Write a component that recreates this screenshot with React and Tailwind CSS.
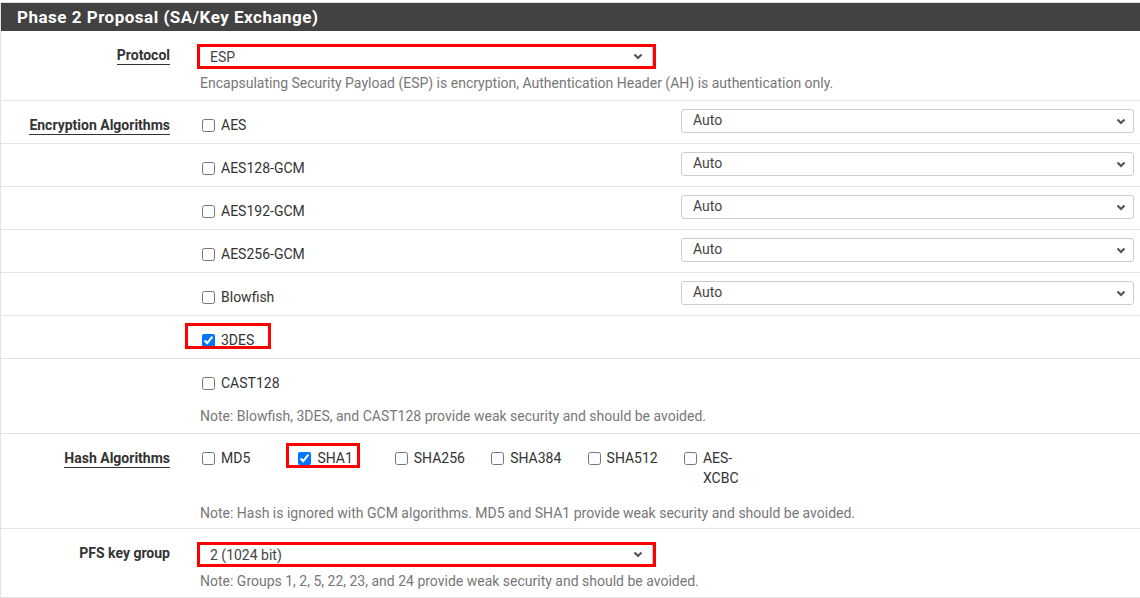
import { useState } from "react";

const font = { fontFamily: "Roboto, 'Liberation Sans', sans-serif" };

function Chevron() {
  return (
    <svg width="10" height="7" viewBox="0 0 10 7" className="shrink-0">
      <path d="M1.5 1.5 L5 5 L8.5 1.5" fill="none" stroke="#555" strokeWidth="2.2" />
    </svg>
  );
}

function FakeSelect({ value, red }) {
  if (red) {
    return (
      <div className="w-[459px] h-[25px] border-[3px] border-[#f00] flex">
        <div className="flex-1 flex items-center justify-between pl-[10px] pr-[9px] border-r border-[#c8c8c8] text-[14px] text-[#444]">
          <span>{value}</span>
          <Chevron />
        </div>
      </div>
    );
  }
  return (
    <div className="w-[453px] h-[24px] border border-[#ccc] rounded-[3px] flex items-center justify-between pl-[11px] pr-[7px] text-[14px] text-[#444]">
      <span className="-mt-[2px]">{value}</span>
      <Chevron />
    </div>
  );
}

function Check({ label, checked, box }) {
  return (
    <label className="relative inline-flex items-start gap-[6px] text-[14px] leading-[20px] text-[#333] align-top">
      <input
        type="checkbox"
        defaultChecked={checked}
        className="w-[13px] h-[13px] mt-[4px] ml-[2px] shrink-0"
      />
      <span>{label}</span>
      {box}
    </label>
  );
}

function Label({ text, underline = true }) {
  return (
    <div className="w-[184px] pr-[15px] pt-[14px] text-right shrink-0">
      <span
        className={
          "text-[14px] leading-[20px] font-bold text-[#333] " +
          (underline ? "border-b border-[#333] pb-[1px]" : "")
        }
      >
        {text}
      </span>
    </div>
  );
}

function Note({ children }) {
  return <div className="text-[14px] leading-[20px] text-[#777]">{children}</div>;
}

function EncRow({ label, name, checked, select = true, box, note }) {
  return (
    <div className="flex border-b border-[#e3e3e3]">
      <Label text={label} />
      <div className="flex-1 pl-[15px]">
        <div className="flex">
          <div className="w-[466px] pt-[14px] pb-[8px] h-[42px]">
            <Check label={name} checked={checked} box={box} />
          </div>
          {select && (
            <div className="pt-[8px] pl-[15px]">
              <FakeSelect value="Auto" />
            </div>
          )}
        </div>
        {note && <div className="pt-[5px] pb-[7px]">{note}</div>}
      </div>
    </div>
  );
}

export default function App() {
  const [hashes] = useState([
    ["MD5", false],
    ["SHA1", true],
    ["SHA256", false],
    ["SHA384", false],
    ["SHA512", false],
    ["AES-XCBC", false],
  ]);

  return (
    <div className="w-[1140px] bg-white pt-[2px] leading-[20px]" style={font}>
      <div className="border-t border-[#e0e0e0] border-l border-l-[#e3e3e3]">
        <div className="h-[28px] bg-[#424242] flex items-center pl-[16px] text-white text-[17px] tracking-[0.5px] font-bold">
          Phase 2 Proposal (SA/Key Exchange)
        </div>

        {/* Protocol */}
        <div className="flex border-b border-[#e3e3e3]">
          <Label text="Protocol" />
          <div className="flex-1 pl-[12px] pt-[13px] pb-[7px]">
            <FakeSelect value="ESP" red />
            <div className="mt-[4px] pl-[3px]">
              <Note>
                Encapsulating Security Payload (ESP) is encryption, Authentication Header (AH) is
                authentication only.
              </Note>
            </div>
          </div>
        </div>

        <EncRow label="Encryption Algorithms" name="AES" />
        <EncRow label="" name="AES128-GCM" />
        <EncRow label="" name="AES192-GCM" />
        <EncRow label="" name="AES256-GCM" />
        <EncRow label="" name="Blowfish" />
        <EncRow
          label=""
          name="3DES"
          checked
          select={false}
          box={
            <span className="absolute left-[-15px] top-[-7px] w-[86px] h-[26px] border-[3px] border-[#f00]" />
          }
        />
        <EncRow
          label=""
          name="CAST128"
          select={false}
          note={<Note>Note: Blowfish, 3DES, and CAST128 provide weak security and should be avoided.</Note>}
        />

        {/* Hash */}
        <div className="flex border-b border-[#e3e3e3]">
          <Label text="Hash Algorithms" />
          <div className="flex-1 pl-[15px]">
            <div className="flex pt-[14px]">
              {hashes.map(([h, c]) => (
                <div key={h} className="w-[96.4px] pr-[28px]">
                  <Check
                    label={h}
                    checked={c}
                    box={
                      c ? (
                        <span className="absolute left-[-10px] top-[-5px] w-[74px] h-[25px] border-[3px] border-[#f00]" />
                      ) : null
                    }
                  />
                </div>
              ))}
            </div>
            <div className="pt-[15px] pb-[5px]">
              <Note>
                Note: Hash is ignored with GCM algorithms. MD5 and SHA1 provide weak security and
                should be avoided.
              </Note>
            </div>
          </div>
        </div>

        {/* PFS */}
        <div className="flex border-b border-[#e3e3e3]">
          <Label text="PFS key group" underline={false} />
          <div className="flex-1 pl-[12px] pt-[13px] pb-[6px]">
            <FakeSelect value="2 (1024 bit)" red />
            <div className="mt-[4px] pl-[3px]">
              <Note>Note: Groups 1, 2, 5, 22, 23, and 24 provide weak security and should be avoided.</Note>
            </div>
          </div>
        </div>
      </div>
    </div>
  );
}
